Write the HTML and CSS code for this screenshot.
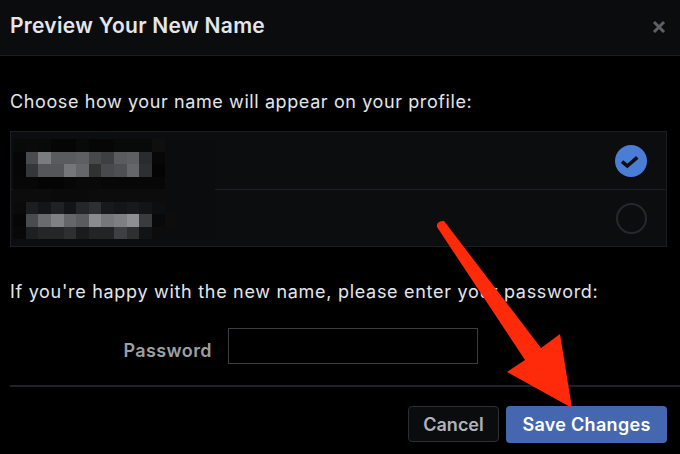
FILE: index.html
```html
<!DOCTYPE html>
<html lang="en">
<head>
<meta charset="utf-8">
<title>Preview Your New Name</title>
<link rel="stylesheet" href="styles.css">
</head>
<body>
<div class="dialog">
  <header class="hd">
    <h1 class="title">Preview Your New Name</h1>
    <button class="close" aria-label="Close">
      <svg width="14" height="14" viewBox="0 0 14 14"><path d="M2 2 L12 12 M12 2 L2 12" stroke="#5e5f63" stroke-width="3" stroke-linecap="butt"/></svg>
    </button>
  </header>

  <main class="bd">
    <p class="lead">Choose how your name will appear on your profile:</p>

    <div class="options">
      <div class="opt opt-first">
        <span class="radio radio-on">
          <svg width="32" height="32" viewBox="0 0 32 32"><circle cx="16" cy="16" r="16" fill="#4a7ed6"/><path d="M7 16.7 L12.3 21 L22.3 12.3" fill="none" stroke="#0d0e10" stroke-width="3.6" stroke-linejoin="miter"/></svg>
        </span>
      </div>
      <div class="opt">
        <span class="radio radio-off"></span>
      </div>
      <svg class="censor" width="202" height="100" viewBox="0 0 16 8" preserveAspectRatio="none" shape-rendering="crispEdges">
        <rect x="0" y="0" width="16" height="8" fill="#0b0c0d"/>
        <g>
          <rect x="0" y="0" width="12" height="1" fill="#080909"/>
          <rect x="1" y="0" width="1" height="1" fill="#0a0a0b"/>
          <rect x="3" y="0" width="2" height="1" fill="#050506"/>
          <rect x="6" y="0" width="2" height="1" fill="#060607"/>
          <rect x="11" y="0" width="1" height="1" fill="#0f0f10"/>
        </g>
        <g>
          <rect x="0" y="1" width="1" height="1" fill="#060606"/>
          <rect x="1" y="1" width="1" height="1" fill="#4a4b4e"/>
          <rect x="2" y="1" width="1" height="1" fill="#7b7c80"/>
          <rect x="3" y="1" width="1" height="1" fill="#5a5b5e"/>
          <rect x="4" y="1" width="1" height="1" fill="#5a5b5e"/>
          <rect x="5" y="1" width="1" height="1" fill="#5e5f62"/>
          <rect x="6" y="1" width="1" height="1" fill="#48494c"/>
          <rect x="7" y="1" width="1" height="1" fill="#3e3f42"/>
          <rect x="8" y="1" width="1" height="1" fill="#5a5b5e"/>
          <rect x="9" y="1" width="1" height="1" fill="#5e5f62"/>
          <rect x="10" y="1" width="1" height="1" fill="#2a2b2e"/>
          <rect x="11" y="1" width="1" height="1" fill="#070708"/>
        </g>
        <g>
          <rect x="0" y="2" width="1" height="1" fill="#060606"/>
          <rect x="1" y="2" width="1" height="1" fill="#353638"/>
          <rect x="2" y="2" width="1" height="1" fill="#55565a"/>
          <rect x="3" y="2" width="1" height="1" fill="#55565a"/>
          <rect x="4" y="2" width="1" height="1" fill="#75767a"/>
          <rect x="5" y="2" width="1" height="1" fill="#65666a"/>
          <rect x="6" y="2" width="1" height="1" fill="#303133"/>
          <rect x="7" y="2" width="1" height="1" fill="#48494c"/>
          <rect x="8" y="2" width="1" height="1" fill="#4e4f52"/>
          <rect x="9" y="2" width="1" height="1" fill="#65666a"/>
          <rect x="10" y="2" width="1" height="1" fill="#2e2f33"/>
          <rect x="11" y="2" width="1" height="1" fill="#040405"/>
        </g>
        <g>
          <rect x="0" y="3" width="12" height="1" fill="#070708"/>
          <rect x="2" y="3" width="2" height="1" fill="#040405"/>
          <rect x="5" y="3" width="2" height="1" fill="#09090a"/>
        </g>
        <g>
          <rect x="0" y="4" width="12" height="1" fill="#0c0c0d"/>
          <rect x="3" y="4" width="3" height="1" fill="#0a0a0b"/>
        </g>
        <g>
          <rect x="0" y="5" width="1" height="1" fill="#0a0a0b"/>
          <rect x="1" y="5" width="1" height="1" fill="#1c1d1f"/>
          <rect x="2" y="5" width="1" height="1" fill="#141516"/>
          <rect x="3" y="5" width="1" height="1" fill="#202123"/>
          <rect x="4" y="5" width="1" height="1" fill="#131415"/>
          <rect x="5" y="5" width="1" height="1" fill="#252628"/>
          <rect x="6" y="5" width="1" height="1" fill="#2e2f31"/>
          <rect x="7" y="5" width="1" height="1" fill="#18191a"/>
          <rect x="8" y="5" width="1" height="1" fill="#141516"/>
          <rect x="9" y="5" width="1" height="1" fill="#18191a"/>
          <rect x="10" y="5" width="1" height="1" fill="#131415"/>
          <rect x="11" y="5" width="1" height="1" fill="#0e0e0f"/>
        </g>
        <g>
          <rect x="0" y="6" width="1" height="1" fill="#060606"/>
          <rect x="1" y="6" width="1" height="1" fill="#4a4b4e"/>
          <rect x="2" y="6" width="1" height="1" fill="#6a6b6e"/>
          <rect x="3" y="6" width="1" height="1" fill="#808185"/>
          <rect x="4" y="6" width="1" height="1" fill="#65666a"/>
          <rect x="5" y="6" width="1" height="1" fill="#5a5b5e"/>
          <rect x="6" y="6" width="1" height="1" fill="#8a8b8e"/>
          <rect x="7" y="6" width="1" height="1" fill="#76777a"/>
          <rect x="8" y="6" width="1" height="1" fill="#7e7f82"/>
          <rect x="9" y="6" width="1" height="1" fill="#8e8f92"/>
          <rect x="10" y="6" width="1" height="1" fill="#3a3b3d"/>
          <rect x="11" y="6" width="1" height="1" fill="#08090a"/>
          <rect x="12" y="6" width="1" height="1" fill="#0e0d0c"/>
        </g>
        <g>
          <rect x="0" y="7" width="1" height="1" fill="#080808"/>
          <rect x="1" y="7" width="1" height="1" fill="#1e1f21"/>
          <rect x="2" y="7" width="1" height="1" fill="#252628"/>
          <rect x="3" y="7" width="1" height="1" fill="#252628"/>
          <rect x="4" y="7" width="1" height="1" fill="#2e2f31"/>
          <rect x="5" y="7" width="1" height="1" fill="#1a1b1c"/>
          <rect x="6" y="7" width="1" height="1" fill="#232426"/>
          <rect x="7" y="7" width="1" height="1" fill="#232426"/>
          <rect x="8" y="7" width="1" height="1" fill="#3e3f42"/>
          <rect x="9" y="7" width="1" height="1" fill="#2e2f31"/>
          <rect x="10" y="7" width="1" height="1" fill="#121314"/>
          <rect x="11" y="7" width="1" height="1" fill="#0c0c0d"/>
        </g>
      </svg>
    </div>

    <p class="lead lead-2">If you're happy with the new name, please enter your password:</p>

    <div class="pw-row">
      <label class="pw-label" for="pw">Password</label>
      <input class="pw-input" id="pw" type="password">
    </div>
  </main>

  <footer class="ft">
    <button class="btn btn-cancel">Cancel</button>
    <button class="btn btn-save">Save Changes</button>
  </footer>

  <svg class="arrow" width="680" height="454" viewBox="0 0 680 454">
    <path d="M444 221 L541 348 L560 334 L572 408 L507 372 L525 360 L437 227 Q436 221 444 221 Z" fill="#ff2a0a"/>
  </svg>
</div>
</body>
</html>
```

FILE: styles.css
```css
* {
  box-sizing: border-box;
}

html, body {
  margin: 0;
  padding: 0;
  background: #000;
}

body {
  font-family: Inter, "Liberation Sans", Arial, sans-serif;
  color: #e4e6eb;
  width: 680px;
  height: 454px;
  overflow: hidden;
}

.dialog {
  position: relative;
  width: 680px;
  height: 454px;
  background: #000;
}

.hd {
  height: 56px;
  display: flex;
  justify-content: space-between;
  align-items: flex-start;
  padding: 14px 14px 0 10px;
  background: #0b0c0e;
  border-bottom: 1px solid #1c1d20;
}

.title {
  margin: 0;
  font-size: 21px;
  line-height: 24px;
  font-weight: 600;
  letter-spacing: 0.3px;
  color: #e4e6eb;
}

.close {
  margin: 6px 0 0 0;
  padding: 0;
  border: 0;
  background: none;
  width: 14px;
  height: 14px;
  display: flex;
}

.bd {
  padding: 36px 0 0 10px;
}

.lead {
  margin: 0;
  font-size: 18px;
  line-height: 20px;
  letter-spacing: 0.6px;
  color: #e4e6eb;
}

.options {
  position: relative;
  margin-top: 19px;
  width: 657px;
  border: 1px solid #1c1d20;
  background: #0c0d0f;
}

.opt {
  height: 56px;
  display: flex;
  justify-content: flex-end;
  align-items: center;
  padding-right: 19px;
}

.opt-first {
  height: 58px;
  border-bottom: 1px solid #1e1f22;
}

.radio {
  width: 32px;
  height: 32px;
  display: flex;
}

.radio-off {
  width: 31px;
  height: 31px;
  margin-right: 0.5px;
  border: 2px solid #27282b;
  border-radius: 50%;
}

.censor {
  position: absolute;
  left: 1.5px;
  top: 6.5px;
}

.lead-2 {
  margin-top: 35px;
  letter-spacing: 0.7px;
}

.pw-row {
  display: flex;
  align-items: flex-start;
  gap: 16px;
  margin-top: 26px;
}

.pw-label {
  width: 202px;
  text-align: right;
  padding-top: 13px;
  font-size: 18px;
  line-height: 20px;
  font-weight: 600;
  letter-spacing: 0.4px;
  color: #9c9fa4;
}

.pw-input {
  width: 250px;
  height: 36px;
  margin: 0;
  border: 1px solid #3c3d41;
  background: #000;
  outline: none;
}

.ft {
  margin: 21px 0 0 10px;
  border-top: 2px solid #212226;
  display: flex;
  justify-content: flex-end;
  gap: 7px;
  padding: 19px 13px 0 0;
}

.btn {
  font-family: Inter, "Liberation Sans", Arial, sans-serif;
  font-size: 18px;
  font-weight: 600;
  border-radius: 4px;
  margin: 0;
  cursor: pointer;
}

.btn-cancel {
  width: 91px;
  height: 36px;
  background: #0b0c0e;
  border: 1px solid #2d2e32;
  color: #b0b3b8;
}

.btn-save {
  width: 161px;
  height: 37px;
  background: #4567b0;
  border: 0;
  color: #fff;
  letter-spacing: 0.3px;
}

.arrow {
  position: absolute;
  left: 0;
  top: 0;
  pointer-events: none;
}
```
